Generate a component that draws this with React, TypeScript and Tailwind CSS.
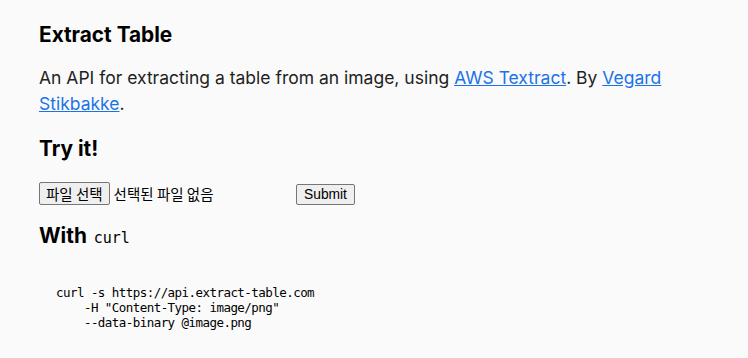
export default function App() {
  const code = `curl -s https://api.extract-table.com
    -H "Content-Type: image/png"
    --data-binary @image.png`;

  return (
    <div className="min-h-screen bg-[#fafafa] text-[#222] font-['Inter',sans-serif]">
      <div className="px-[39px] pt-[21px]">
        <h1 className="text-[20.8px] leading-[28px] font-bold text-black">Extract Table</h1>

        <p className="mt-[16px] text-[17.5px] leading-[26px] text-[#222] max-w-[660px]">
          An API for extracting a table from an image, using{' '}
          <a href="#" className="text-[#1a73e8] underline">AWS Textract</a>. By{' '}
          <a href="#" className="text-[#1a73e8] underline">Vegard Stikbakke</a>.
        </p>

        <h2 className="mt-[18px] text-[20.8px] leading-[28px] font-bold text-black">Try it!</h2>

        <form className="mt-[19px] flex items-end" onSubmit={(e) => e.preventDefault()}>
          <div className="flex items-center w-[253px]">
            <button
              type="button"
              className="bg-[#efefef] border border-[#767676] rounded-[2px] px-[6px] py-px text-[14.5px] leading-[19px] text-black font-['Noto_Sans_CJK_KR',sans-serif]"
            >
              파일 선택
            </button>
            <span className="ml-[4px] text-[14.5px] text-black font-['Noto_Sans_CJK_KR',sans-serif]">
              선택된 파일 없음
            </span>
          </div>
          <button
            type="submit"
            className="ml-[4px] bg-[#efefef] border border-[#767676] rounded-[2px] px-[7px] py-px text-[13.8px] leading-[17px] text-black font-['Liberation_Sans',Arial,sans-serif]"
          >
            Submit
          </button>
        </form>

        <h2 className="mt-[17px] text-[20.8px] leading-[28px] font-bold text-black">
          With{' '}
          <code className="ml-[2px] text-[15px] font-normal font-['DejaVu_Sans_Mono',monospace]">curl</code>
        </h2>

        <pre className="mt-[33px] pl-[17px] text-[12.5px] leading-[15px] tracking-[-0.55px] text-black font-['DejaVu_Sans_Mono',monospace]">
          {code}
        </pre>
      </div>
    </div>
  );
}
